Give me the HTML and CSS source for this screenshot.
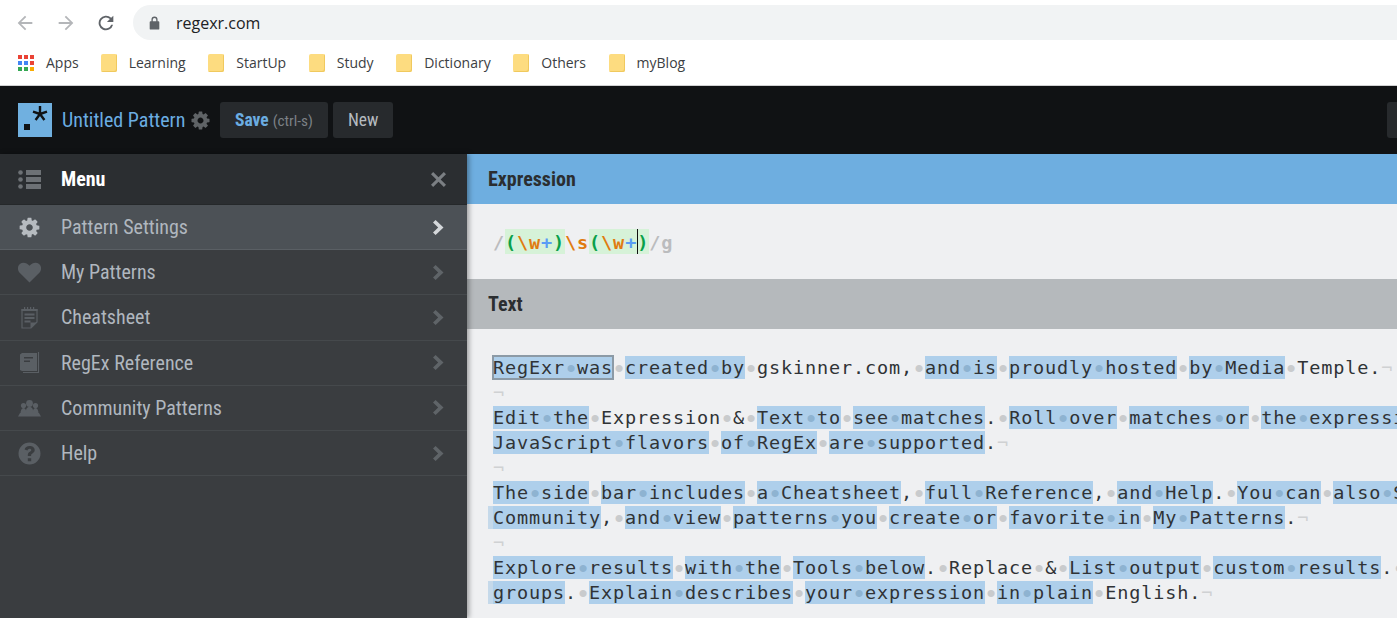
FILE: index.html
```html
<!DOCTYPE html>
<html lang="en">
<head>
<meta charset="utf-8">
<title>RegExr</title>
<link rel="stylesheet" href="styles.css">
</head>
<body>
<div class="browser">
  <div class="toolbar">
    <svg class="nav" viewBox="0 0 24 24"><path d="M20 11H7.800l5.600-5.600L12 4l-8 8 8 8 1.400-1.400L7.800 13H20z" fill="#b4b6b9"/></svg>
    <svg class="nav" viewBox="0 0 24 24"><path d="M4 11h12.200l-5.600-5.600L12 4l8 8-8 8-1.400-1.400 5.600-5.600H4z" fill="#b4b6b9"/></svg>
    <svg class="nav" viewBox="0 0 24 24"><path d="M17.650 6.350A8 8 0 1 0 19.730 14h-2.080a6 6 0 1 1-1.410-6.240L13 11h7V4z" fill="#5f6368"/></svg>
    <div class="omnibox">
      <svg class="lock" viewBox="0 0 12 16"><path d="M2.500 6V4.200a3.500 3.500 0 0 1 7 0V6h1a1 1 0 0 1 1 1v7.500a1 1 0 0 1-1 1h-9a1 1 0 0 1-1-1V7a1 1 0 0 1 1-1zM4 6h4V4.200a2 2 0 0 0-4 0z" fill="#5f6368"/></svg>
      <span class="url">regexr.com</span>
    </div>
  </div>
  <div class="bookmarks">
    <div class="bm bm-apps">
      <span class="apps"><i class="r"></i><i class="r"></i><i class="r"></i><i class="b"></i><i class="b"></i><i class="y"></i><i class="g"></i><i class="g"></i><i class="y"></i></span>
      <span class="bm-text">Apps</span>
    </div>
    <div class="bm"><span class="folder"></span><span class="bm-text">Learning</span></div>
    <div class="bm"><span class="folder"></span><span class="bm-text">StartUp</span></div>
    <div class="bm"><span class="folder"></span><span class="bm-text">Study</span></div>
    <div class="bm"><span class="folder"></span><span class="bm-text">Dictionary</span></div>
    <div class="bm"><span class="folder"></span><span class="bm-text">Others</span></div>
    <div class="bm"><span class="folder"></span><span class="bm-text">myBlog</span></div>
  </div>
</div>
<header class="topbar">
  <svg class="logo" viewBox="0 0 34 34"><rect width="34" height="34" fill="#70b0e0"/><rect x="6" y="21" width="6" height="6" fill="#101214"/><path d="M22 3v8M22 11l-7-2.400M22 11l7-2.400M22 11l-4.400 6M22 11l4.400 6" stroke="#101214" stroke-width="2.400" fill="none"/></svg>
  <span class="title"><span class="cond">Untitled Pattern</span></span>
  <svg class="gear-top" viewBox="0 0 1792 1792"><use href="#cog"/></svg>
  <div class="btn btn-save"><span class="cond"><b>Save</b> <small>(ctrl-s)</small></span></div>
  <div class="btn btn-new"><span class="cond">New</span></div>
  <div class="btn-edge"></div>
</header>
<svg class="defs" width="0" height="0"><defs><path id="cog" d="M1152 896q0-106-75-181t-181-75-181 75-75 181 75 181 181 75 181-75 75-181zm512-109v222q0 12-8 23t-20 13l-185 28q-19 54-39 91 35 50 107 138 10 12 10 25t-9 23q-27 37-99 108t-94 71q-12 0-26-9l-138-108q-44 23-91 38-16 136-29 186-7 28-36 28h-222q-14 0-24.500-8.500t-11.500-21.500l-28-184q-49-16-90-37l-141 107q-10 9-25 9-14 0-25-11-126-114-165-168-7-10-7-23 0-12 8-23 15-21 51-66.500t54-70.500q-27-50-41-99l-183-27q-13-2-21-12.500t-8-23.500v-222q0-12 8-23t19-13l186-28q14-46 39-92-40-57-107-138-10-12-10-24 0-10 9-23 26-36 98.500-107.500t94.500-71.500q13 0 26 10l138 107q44-23 91-38 16-136 29-186 7-28 36-28h222q14 0 24.500 8.500t11.500 21.500l28 184q49 16 90 37l142-107q9-9 24-9 13 0 25 10 129 119 165 170 7 8 7 22 0 12-8 23-15 21-51 66.500t-54 70.500q26 50 41 98l183 28q13 2 21 12.500t8 23.500z" fill="currentColor"/><path id="chev" d="M0 2.500 2.600 0l7.900 7.500L2.600 15 0 12.500 5.200 7.500z" fill="currentColor"/></defs></svg>
<main class="app">
  <aside class="sidebar">
    <div class="menu-head">
      <svg class="ico" viewBox="0 0 23 20"><g fill="#6d7175"><circle cx="2.500" cy="3" r="2.300"/><circle cx="2.500" cy="10" r="2.300"/><circle cx="2.500" cy="17" r="2.300"/><rect x="8" y="0.500" width="15" height="5"/><rect x="8" y="7.500" width="15" height="5"/><rect x="8" y="14.500" width="15" height="5"/></g></svg>
      <span class="cond mlabel strong">Menu</span>
      <svg class="close" viewBox="0 0 14 14"><path d="M2 0 7 5l5-5 2 2-5 5 5 5-2 2-5-5-5 5-2-2 5-5-5-5z" fill="#7b7f83"/></svg>
    </div>
    <div class="item active">
      <svg class="ico" viewBox="0 0 1792 1792"><use href="#cog"/></svg>
      <span class="cond mlabel">Pattern Settings</span>
      <svg class="chev" viewBox="0 0 11 15"><use href="#chev"/></svg>
    </div>
    <div class="item">
      <svg class="ico" viewBox="0 0 24 21"><path d="M12 21 2 11C-1 8-.5 3.500 2 1.500c3-2.300 7-1.500 10 2 3-3.500 7-4.300 10-2 2.500 2 3 6.500 0 9.500z" fill="currentColor"/></svg>
      <span class="cond mlabel">My Patterns</span>
      <svg class="chev" viewBox="0 0 11 15"><use href="#chev"/></svg>
    </div>
    <div class="item">
      <svg class="ico" viewBox="0 0 23 23"><path d="M4 3.500h15v12.500l-6 6H4z" fill="none" stroke="currentColor" stroke-width="1.200"/><path d="M6 1h1.200v4H6zM9 1h1.200v4H9zM12 1h1.200v4H12zM15 1h1.200v4H15zM3.500 3h16v2h-16zM6.500 7.500h10v2h-10zM6.500 11h10v2h-10zM6.500 14.500h6v2h-6zM12.500 16.500h6.500l-6.500 5.500z" fill="currentColor"/></svg>
      <span class="cond mlabel">Cheatsheet</span>
      <svg class="chev" viewBox="0 0 11 15"><use href="#chev"/></svg>
    </div>
    <div class="item">
      <svg class="ico" viewBox="0 0 23 23"><path d="M2 3.500 4 2h15v18H4l-2-1z" fill="currentColor"/><path d="M20.500 1v20.500H5" fill="none" stroke="currentColor" stroke-width="1.100"/><path d="M6 6h9v1.600H6zM6 9.500h6v1.600H6z" fill="#3a3d40"/></svg>
      <span class="cond mlabel">RegEx Reference</span>
      <svg class="chev" viewBox="0 0 11 15"><use href="#chev"/></svg>
    </div>
    <div class="item">
      <svg class="ico" viewBox="0 0 23 20"><g fill="currentColor"><circle cx="11.500" cy="6" r="3.400"/><path d="M7.500 17c0-5 1-7.500 4-7.500s4 2.500 4 7.500z"/><circle cx="5.500" cy="8" r="2.600"/><circle cx="17.500" cy="8" r="2.600"/><path d="M2.500 16c0-3 1-5.500 3-5.500s3 2.500 3 5.500zM14.500 16c0-3 1-5.500 3-5.500s3 2.500 3 5.500z"/><path d="M2 15.500h19l2 3.500H0z"/></g></svg>
      <span class="cond mlabel">Community Patterns</span>
      <svg class="chev" viewBox="0 0 11 15"><use href="#chev"/></svg>
    </div>
    <div class="item">
      <svg class="ico" viewBox="0 0 23 23"><path fill-rule="evenodd" d="M11.500.5a11 11 0 1 1 0 22 11 11 0 0 1 0-22zM9.800 16.200v3h3.400v-3zM11.600 4c-2.700 0-4.500 1.400-5 3.500l2.900 1c.3-1 1-1.700 2-1.700s1.800.5 1.800 1.300c0 .7-.5 1.100-1.400 1.700-1.300.8-2.100 1.600-2.100 3.200v1h3.300v-.7c0-.7.400-1.100 1.300-1.700 1.300-.8 2.300-1.800 2.300-3.500C16.700 5.500 14.400 4 11.600 4z" fill="currentColor"/></svg>
      <span class="cond mlabel">Help</span>
      <svg class="chev" viewBox="0 0 11 15"><use href="#chev"/></svg>
    </div>
  </aside>
  <section class="content">
    <div class="band band-blue"><span class="cond">Expression</span></div>
    <div class="expr"><span class="sl">/</span><span class="grp"><span class="gr">(</span><span class="or">\w</span><span class="pl">+</span><span class="gr">)</span></span><span class="or">\s</span><span class="grp"><span class="gr">(</span><span class="or">\w</span><span class="pl">+</span><span class="caret"></span><span class="gr">)</span></span><span class="sl">/g</span></div>
    <div class="band band-grey"><span class="cond">Text</span></div>
    <div class="text">
      <div class="ln"><mark class="sel">RegExr<i>•</i>was</mark><i>•</i><mark>created<i>•</i>by</mark><i>•</i>gskinner.com,<i>•</i><mark>and<i>•</i>is</mark><i>•</i><mark>proudly<i>•</i>hosted</mark><i>•</i><mark>by<i>•</i>Media</mark><i>•</i>Temple.<u>¬</u></div>
      <div class="ln"><u>¬</u></div>
      <div class="ln"><mark>Edit<i>•</i>the</mark><i>•</i>Expression<i>•</i>&amp;<i>•</i><mark>Text<i>•</i>to</mark><i>•</i><mark>see<i>•</i>matches</mark>.<i>•</i><mark>Roll<i>•</i>over</mark><i>•</i><mark>matches<i>•</i>or</mark><i>•</i><mark>the<i>•</i>expression</mark></div>
      <div class="ln"><mark>JavaScript<i>•</i>flavors</mark><i>•</i><mark>of<i>•</i>RegEx</mark><i>•</i><mark>are<i>•</i>supported</mark>.<u>¬</u></div>
      <div class="ln"><u>¬</u></div>
      <div class="ln"><mark>The<i>•</i>side</mark><i>•</i><mark>bar<i>•</i>includes</mark><i>•</i><mark>a<i>•</i>Cheatsheet</mark>,<i>•</i><mark>full<i>•</i>Reference</mark>,<i>•</i><mark>and<i>•</i>Help</mark>.<i>•</i><mark>You<i>•</i>can</mark><i>•</i><mark>also<i>•</i>Save</mark></div>
      <div class="ln"><mark class="cont">Community</mark>,<i>•</i><mark>and<i>•</i>view</mark><i>•</i><mark>patterns<i>•</i>you</mark><i>•</i><mark>create<i>•</i>or</mark><i>•</i><mark>favorite<i>•</i>in</mark><i>•</i><mark>My<i>•</i>Patterns</mark>.<u>¬</u></div>
      <div class="ln"><u>¬</u></div>
      <div class="ln"><mark>Explore<i>•</i>results</mark><i>•</i><mark>with<i>•</i>the</mark><i>•</i><mark>Tools<i>•</i>below</mark>.<i>•</i>Replace<i>•</i>&amp;<i>•</i><mark>List<i>•</i>output</mark><i>•</i><mark>custom<i>•</i>results</mark>.<i>•</i></div>
      <div class="ln"><mark class="cont">groups</mark>.<i>•</i><mark>Explain<i>•</i>describes</mark><i>•</i><mark>your<i>•</i>expression</mark><i>•</i><mark>in<i>•</i>plain</mark><i>•</i>English.<u>¬</u></div>
    </div>
  </section>
</main>
</body>
</html>
```
FILE: styles.css
```css
* { box-sizing: border-box; }
html, body { margin: 0; padding: 0; height: 618px; overflow: hidden; background: #fff; }
body { font-family: Roboto, "Liberation Sans", sans-serif; display: flex; flex-direction: column; }
.defs { position: absolute; }
.browser { height: 86px; flex: none; background: #fff; border-bottom: 1px solid #d0d1d2; }
.toolbar { height: 45px; display: flex; align-items: center; padding: 0 0 0 14px; }
.nav { width: 22px; height: 22px; margin-right: 19px; flex: none; }
.nav:nth-child(3) { margin-right: 6px; margin-left: -1px; }
.omnibox { flex: 1; height: 35px; margin-left: 10px; background: #f1f3f4; border-radius: 18px 0 0 18px; display: flex; align-items: center; padding-left: 16px; font-family: "Open Sans", "Liberation Sans", sans-serif; font-size: 16px; color: #202124; }
.lock { width: 11px; height: 14px; margin-right: 16px; }
.bookmarks { height: 36px; display: flex; align-items: center; padding-left: 18px; font-family: "Open Sans", "Liberation Sans", sans-serif; font-size: 14px; color: #3c4043; }
.bm { display: flex; align-items: center; gap: 12px; margin-right: 22.6px; }
.bm-apps { margin-right: 22px; }
.bm-text { padding-bottom: 2px; }
.apps { display: grid; grid-template-columns: repeat(3, 4px); grid-auto-rows: 4px; gap: 2px; width: 16px; }
.apps i { display: block; }
.apps .r { background: #ea4335; } .apps .b { background: #4285f4; } .apps .y { background: #f9ab00; } .apps .g { background: #34a853; }
.apps i:nth-child(6) { background: #ea4335; }
.folder { width: 16px; height: 18px; background: #fddc80; border-radius: 2px; display: block; box-shadow: inset -1px -1px 0 #f0c95e; }
.topbar { height: 68px; flex: none; background: #101214; display: flex; align-items: center; padding-left: 18px; position: relative; }
.cond { display: inline-block; font-stretch: condensed; white-space: nowrap; }
.logo { width: 34px; height: 34px; margin-right: 10px; flex: none; }
.title { font-size: 20px; color: #6bade2; width: 128px; }
.gear-top { width: 21px; height: 21px; color: #5f6366; margin-right: 9px; }
.btn { height: 36px; background: #272a2d; border-radius: 3px; display: flex; align-items: center; padding-left: 15px; color: #b6bbc0; font-size: 17.5px; }
.btn b { color: #6bade2; font-weight: 700; }
.btn small { color: #7c8186; font-size: 15.3px; }
.btn-save { width: 108px; }
.btn-new { width: 60px; margin-left: 5px; }
.btn-edge { position: absolute; right: 0; top: 16px; width: 10px; height: 36px; background: #272a2d; border-radius: 3px 0 0 3px; }
.app { flex: 1; display: flex; min-height: 0; }
.sidebar { width: 467px; flex: none; background: #3a3d40; position: relative; z-index: 1; box-shadow: 2px 0 5px rgba(0,0,0,.35); }
.menu-head { height: 51px; background: #2b2e31; border-bottom: 1px solid #25282a; display: flex; align-items: center; padding: 0 21px 0 18px; }
.item { height: 45.2px; border-bottom: 1px solid #45494c; display: flex; align-items: center; padding: 0 23px 0 18px; color: #5a5f64; }
.item.active { background: #4c5156; color: #b6bbc0; border-bottom-color: #5a5f64; }
.ico { width: 23px; height: 23px; flex: none; margin-right: 20px; }
.mlabel { font-size: 20px; color: #b0b7bf; flex: 1; }
.mlabel.strong { color: #fff; font-weight: 700; }
.close { width: 15px; height: 15px; }
.chev { width: 11px; height: 15px; color: #5f6468; }
.active .chev { color: #d4d7da; }
.content { flex: 1; min-width: 0; background: #eff0f2; display: flex; flex-direction: column; overflow: hidden; }
.band { height: 50px; flex: none; display: flex; align-items: center; padding-left: 21px; font-size: 20px; font-weight: 700; color: #2b2e31; }
.band-blue { background: #6eaee0; }
.band-grey { background: #b5b9bc; }
.expr { height: 75px; flex: none; padding: 0 0 0 26px; display: flex; align-items: center; font-family: "DejaVu Sans Mono", monospace; font-weight: 700; font-size: 18.5px; letter-spacing: .863px; color: #333; white-space: pre; }
.grp { background: #d6f2d8; height: 25px; display: flex; align-items: center; }
.sl, .gr, .or, .pl { padding-top: 2px; }
.sl { color: #bbbcbe; }
.gr { color: #0aa04a; }
.or { color: #e07b10; }
.pl { color: #5a9cf5; }
.caret { width: 1px; height: 25px; background: #111; margin-right: -1px; }
.text { padding: 26px 0 0 26px; font-family: "DejaVu Sans Mono", monospace; font-size: 18.5px; letter-spacing: .863px; line-height: 25px; color: #303336; }
.ln { height: 25px; white-space: pre; }
.ln i { display: inline-block; width: 12px; line-height: 0; text-align: center; letter-spacing: 0; font-family: "Liberation Sans", sans-serif; font-size: 26px; font-style: normal; color: #c9cbcd; vertical-align: -3px; }
.ln u { text-decoration: none; color: #cfd1d3; }
mark { background: #aecfeb; color: inherit; padding: 1px 0; }
mark i { color: #8eb3d1 !important; }
mark.sel { box-shadow: 0 0 0 1px #8c9aa6, inset 0 0 0 1px #8c9aa6; }
mark.cont { box-shadow: -5px 0 0 #c5d9ea; }
```
